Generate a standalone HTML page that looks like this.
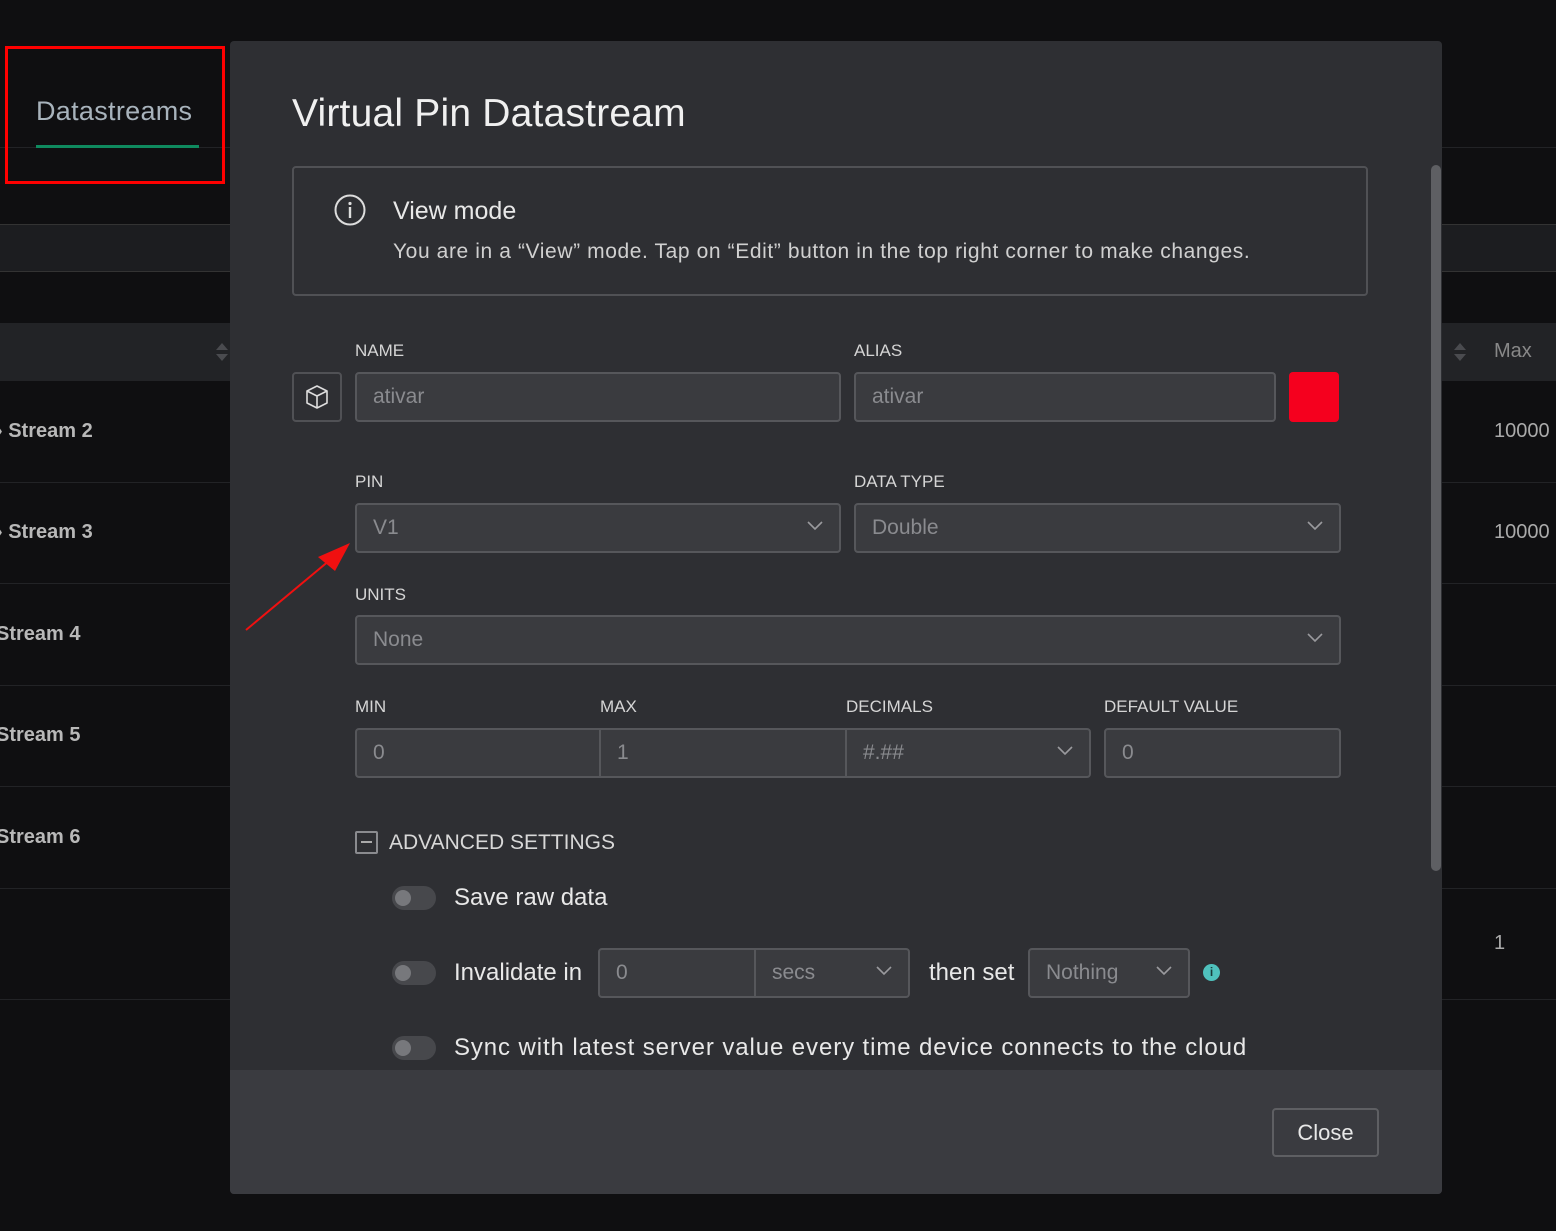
<!DOCTYPE html>
<html><head><meta charset="utf-8"><style>
*{box-sizing:border-box;margin:0;padding:0}
body{width:1556px;height:1231px;background:#0f0f11;position:relative;overflow:hidden;font-family:"Liberation Sans",sans-serif;color:#e6e6e6}
.a{position:absolute}
.row{position:absolute;left:0;width:1556px;border-top:1px solid #222326}
.lt{position:absolute;font-size:20px;color:#b8b8b8;font-weight:bold}
.lbl{position:absolute;font-size:17px;color:#d5d5d5}
.in{position:absolute;background:#3a3b3f;border:2px solid #56575b;border-radius:4px;height:50px;font-size:21px;color:#8a8b8f;padding:0 0 0 16px;line-height:46px}
.chev{position:absolute;right:16px;top:16px;width:16px;height:10px}
.tog{position:absolute;width:44px;height:24px;border-radius:12px;background:#47484c}
.tog:after{content:"";position:absolute;left:3px;top:4px;width:16px;height:16px;border-radius:50%;background:#77787c}
.tx{position:absolute;font-size:24px;color:#e8e8e8}
</style></head><body>
<div class="a" style="left:0;top:147px;width:1556px;height:1px;background:#222326"></div>
<div class="a" style="left:0;top:224px;width:1556px;height:48px;background:#1c1d20;border-top:1px solid #333;border-bottom:1px solid #333"></div>
<div class="a" style="left:0;top:323px;width:1556px;height:58px;background:#222326"></div>
<div class="row" style="top:482px"></div><div class="row" style="top:583px"></div><div class="row" style="top:685px"></div><div class="row" style="top:786px"></div><div class="row" style="top:888px"></div><div class="row" style="top:999px"></div>
<div class="lt" style="left:36px;top:96px;font-size:27px;color:#a8b3bc;font-weight:normal;letter-spacing:0.3px">Datastreams</div>
<div class="a" style="left:36px;top:145px;width:163px;height:3px;background:#0f8a5f"></div>
<div class="a" style="left:5px;top:46px;width:220px;height:138px;border:3px solid #f00"></div>
<div class="lt" style="left:-4px;top:420px">› Stream 2</div>
<div class="lt" style="left:-4px;top:521px">› Stream 3</div>
<div class="lt" style="left:-4px;top:623px">Stream 4</div>
<div class="lt" style="left:-4px;top:724px">Stream 5</div>
<div class="lt" style="left:-4px;top:826px">Stream 6</div>
<svg class="a" style="left:215px;top:341px" width="14" height="22"><path d="M7 2 L13 9 H1 Z M7 20 L13 13 H1 Z" fill="#4a4b4f"/></svg>
<svg class="a" style="left:1453px;top:341px" width="14" height="22"><path d="M7 2 L13 9 H1 Z M7 20 L13 13 H1 Z" fill="#4a4b4f"/></svg>
<div class="lt" style="left:1494px;top:340px;color:#888;font-weight:normal">Max</div>
<div class="lt" style="left:1494px;top:420px;color:#aaa;font-weight:normal">10000</div>
<div class="lt" style="left:1494px;top:521px;color:#aaa;font-weight:normal">10000</div>
<div class="lt" style="left:1494px;top:932px;color:#aaa;font-weight:normal">1</div>
<div class="a" style="left:230px;top:41px;width:1212px;height:1153px;background:#2e2f33;border-radius:4px;overflow:hidden">
 <div class="a" style="left:0;top:1029px;width:1212px;height:124px;background:#3a3b40"></div>
</div>
<div class="a" style="left:1431px;top:165px;width:10px;height:706px;border-radius:5px;background:#5e5f63"></div>
<div class="tx" style="left:292px;top:92px;font-size:39px;color:#f0f0f0;letter-spacing:0.2px">Virtual Pin Datastream</div>
<div class="a" style="left:292px;top:166px;width:1076px;height:130px;border:2px solid #505155;border-radius:4px"></div>
<svg class="a" style="left:333px;top:193px" width="34" height="34" viewBox="0 0 34 34"><circle cx="17" cy="17" r="14.5" fill="none" stroke="#ddd" stroke-width="2"/><circle cx="17" cy="10.5" r="1.6" fill="#ddd"/><rect x="15.8" y="14" width="2.4" height="11" fill="#ddd"/></svg>
<div class="tx" style="left:393px;top:197px;font-size:25px">View mode</div>
<div class="tx" style="left:393px;top:240px;font-size:21px;color:#d0d0d0;letter-spacing:0.6px">You are in a “View” mode. Tap on “Edit” button in the top right corner to make changes.</div>
<div class="lbl" style="left:355px;top:341px">NAME</div>
<div class="lbl" style="left:854px;top:341px">ALIAS</div>
<div class="a" style="left:292px;top:372px;width:50px;height:50px;border:2px solid #505155;border-radius:4px"></div>
<svg class="a" style="left:303px;top:383px" width="28" height="28" viewBox="0 0 28 28" fill="none" stroke="#ddd" stroke-width="1.6" stroke-linejoin="round"><path d="M14 3 L24 8 V20 L14 25 L4 20 V8 Z M4 8 L14 13 L24 8 M14 13 V25"/></svg>
<div class="in" style="left:355px;top:372px;width:486px">ativar</div>
<div class="in" style="left:854px;top:372px;width:422px">ativar</div>
<div class="a" style="left:1289px;top:372px;width:50px;height:50px;background:#f5001e;border-radius:4px"></div>
<div class="lbl" style="left:355px;top:472px">PIN</div>
<div class="lbl" style="left:854px;top:472px">DATA TYPE</div>
<div class="in" style="left:355px;top:503px;width:486px">V1<svg class="chev" viewBox="0 0 16 10"><path d="M1 1 L8 8 L15 1" fill="none" stroke="#9a9a9e" stroke-width="1.6"/></svg></div>
<div class="in" style="left:854px;top:503px;width:487px">Double<svg class="chev" viewBox="0 0 16 10"><path d="M1 1 L8 8 L15 1" fill="none" stroke="#9a9a9e" stroke-width="1.6"/></svg></div>
<div class="lbl" style="left:355px;top:585px">UNITS</div>
<div class="in" style="left:355px;top:615px;width:986px">None<svg class="chev" viewBox="0 0 16 10"><path d="M1 1 L8 8 L15 1" fill="none" stroke="#9a9a9e" stroke-width="1.6"/></svg></div>
<div class="lbl" style="left:355px;top:697px">MIN</div>
<div class="lbl" style="left:600px;top:697px">MAX</div>
<div class="lbl" style="left:846px;top:697px">DECIMALS</div>
<div class="lbl" style="left:1104px;top:697px">DEFAULT VALUE</div>
<div class="in" style="left:355px;top:728px;width:246px;border-radius:4px 0 0 4px">0</div>
<div class="in" style="left:599px;top:728px;width:248px;border-radius:0">1</div>
<div class="in" style="left:845px;top:728px;width:246px;border-radius:0 4px 4px 0">#.##<svg class="chev" viewBox="0 0 16 10"><path d="M1 1 L8 8 L15 1" fill="none" stroke="#9a9a9e" stroke-width="1.6"/></svg></div>
<div class="in" style="left:1104px;top:728px;width:237px">0</div>
<div class="a" style="left:355px;top:831px;width:23px;height:23px;border:2px solid #8a8b8f;border-radius:2px"></div>
<div class="a" style="left:361px;top:841px;width:11px;height:2px;background:#aaa"></div>
<div class="tx" style="left:389px;top:831px;font-size:21px;color:#d8d8d8">ADVANCED SETTINGS</div>
<div class="tog" style="left:392px;top:886px"></div>
<div class="tx" style="left:454px;top:884px">Save raw data</div>
<div class="tog" style="left:392px;top:961px"></div>
<div class="tx" style="left:454px;top:959px">Invalidate in</div>
<div class="in" style="left:598px;top:948px;width:158px;border-radius:4px 0 0 4px">0</div>
<div class="in" style="left:754px;top:948px;width:156px;border-radius:0 4px 4px 0">secs<svg class="chev" viewBox="0 0 16 10"><path d="M1 1 L8 8 L15 1" fill="none" stroke="#9a9a9e" stroke-width="1.6"/></svg></div>
<div class="tx" style="left:929px;top:959px">then set</div>
<div class="in" style="left:1028px;top:948px;width:162px">Nothing<svg class="chev" viewBox="0 0 16 10"><path d="M1 1 L8 8 L15 1" fill="none" stroke="#9a9a9e" stroke-width="1.6"/></svg></div>
<div class="a" style="left:1203px;top:964px;width:17px;height:17px;border-radius:50%;background:#4fc1bd;color:#1a3a3a;font-size:12px;font-weight:bold;text-align:center;line-height:17px">i</div>
<div class="tog" style="left:392px;top:1036px"></div>
<div class="tx" style="left:454px;top:1034px;letter-spacing:0.9px">Sync with latest server value every time device connects to the cloud</div>
<div class="a" style="left:1272px;top:1108px;width:107px;height:49px;border:2px solid #5e5f63;border-radius:4px;font-size:22px;color:#e8e8e8;text-align:center;line-height:45px">Close</div>
<svg class="a" style="left:240px;top:535px" width="120" height="100"><line x1="6" y1="95" x2="90" y2="25" stroke="#f01010" stroke-width="2"/><path d="M110 8 L78 22 L95 36 Z" fill="#f01010"/></svg>
</body></html>
